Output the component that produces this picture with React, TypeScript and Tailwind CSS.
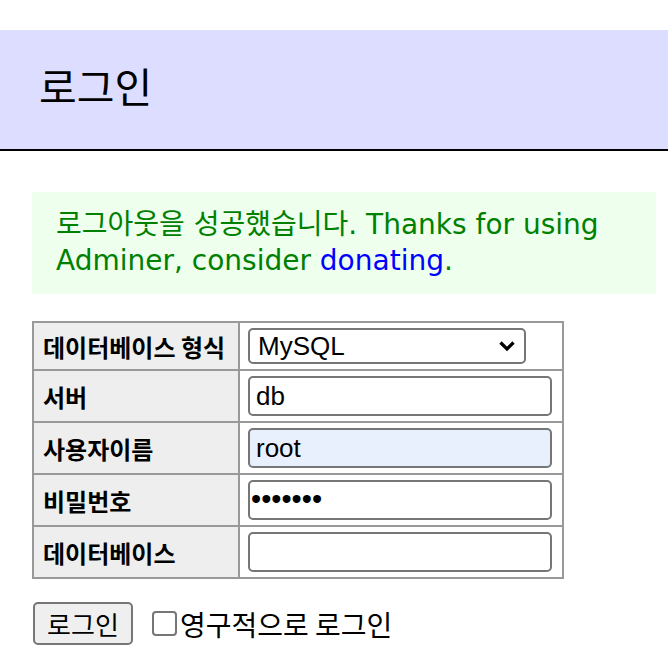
import React from "react";

export default function App() {
  const sans = { fontFamily: '"Liberation Sans", "Noto Sans CJK KR", sans-serif' };
  const kr = { fontFamily: '"Noto Sans CJK KR", sans-serif' };
  const rows: { label: string; kind: "select" | "text" | "password"; value: string; bg?: string; h: string }[] = [
    { label: "데이터베이스 형식", kind: "select", value: "MySQL", h: "h-[48px]" },
    { label: "서버", kind: "text", value: "db", h: "h-[52px]" },
    { label: "사용자이름", kind: "text", value: "root", bg: "blue", h: "h-[52px]" },
    { label: "비밀번호", kind: "password", value: "•••••••", h: "h-[52px]" },
    { label: "데이터베이스", kind: "text", value: "", h: "h-[52px]" },
  ];
  return (
    <div className="min-h-[668px] bg-white pt-[30px] text-black" style={sans}>
      <h2
        className="flex h-[121px] items-center border-b-2 border-black bg-[#ddddff] pb-[8px] pl-[39px] text-[41px] font-normal"
        style={kr}
      >
        로그인
      </h2>
      <div
        className="ml-[32px] mr-[12px] mt-[41px] bg-[#eeffee] py-[15px] pl-[24px] pr-[24px] text-[28px] leading-[36px] text-[#008000]"
        style={{ fontFamily: '"DejaVu Sans", "Noto Sans CJK KR", sans-serif' }}
      >
        로그아웃을 성공했습니다. Thanks for using Adminer, consider{" "}
        <a className="text-[#0000ff]">donating</a>.
      </div>
      <table className="ml-[32px] mt-[27px] border-collapse border-2 border-[#999999]">
        <tbody>
          {rows.map((r) => (
            <tr key={r.label} className={r.h}>
              <th
                className="w-[206px] border-2 border-[#999999] bg-[#eeeeee] px-[9px] pt-[2px] text-left text-[24px] font-bold"
                style={kr}
              >
                {r.label}
              </th>
              <td className="w-[324px] border-2 border-[#999999] px-[8px]">
                {r.kind === "select" ? (
                  <div className="flex h-[36px] w-[278px] items-center justify-between rounded-[5px] border-2 border-[#767676] bg-white pl-[8px] pr-[8px] text-[26px]">
                    <span>{r.value}</span>
                    <svg width="18" height="12" viewBox="0 0 18 12">
                      <path d="M2.5 2.5 L9 9 L15.5 2.5" fill="none" stroke="black" strokeWidth="3.2" />
                    </svg>
                  </div>
                ) : (
                  <div
                    className={`flex h-[40px] w-[304px] items-center rounded-[5px] border-2 border-[#767676] ${
                      r.bg ? "bg-[#e8f0fe]" : "bg-white"
                    } ${r.kind === "password" ? "pl-[1px] text-[29px]" : "pl-[6px] text-[26px]"}`}
                  >
                    {r.value}
                  </div>
                )}
              </td>
            </tr>
          ))}
        </tbody>
      </table>
      <div className="ml-[33px] mt-[23px] flex items-center">
        <div
          className="flex h-[43px] w-[100px] items-center justify-center rounded-[5px] border-2 border-[#767676] bg-[#efefef] text-[26px]"
          style={kr}
        >
          로그인
        </div>
        <div className="ml-[19px] h-[25px] w-[25px] rounded-[4px] border-2 border-[#767676] bg-white" />
        <span className="ml-[3px] text-[28px]" style={kr}>
          영구적으로 로그인
        </span>
      </div>
    </div>
  );
}
